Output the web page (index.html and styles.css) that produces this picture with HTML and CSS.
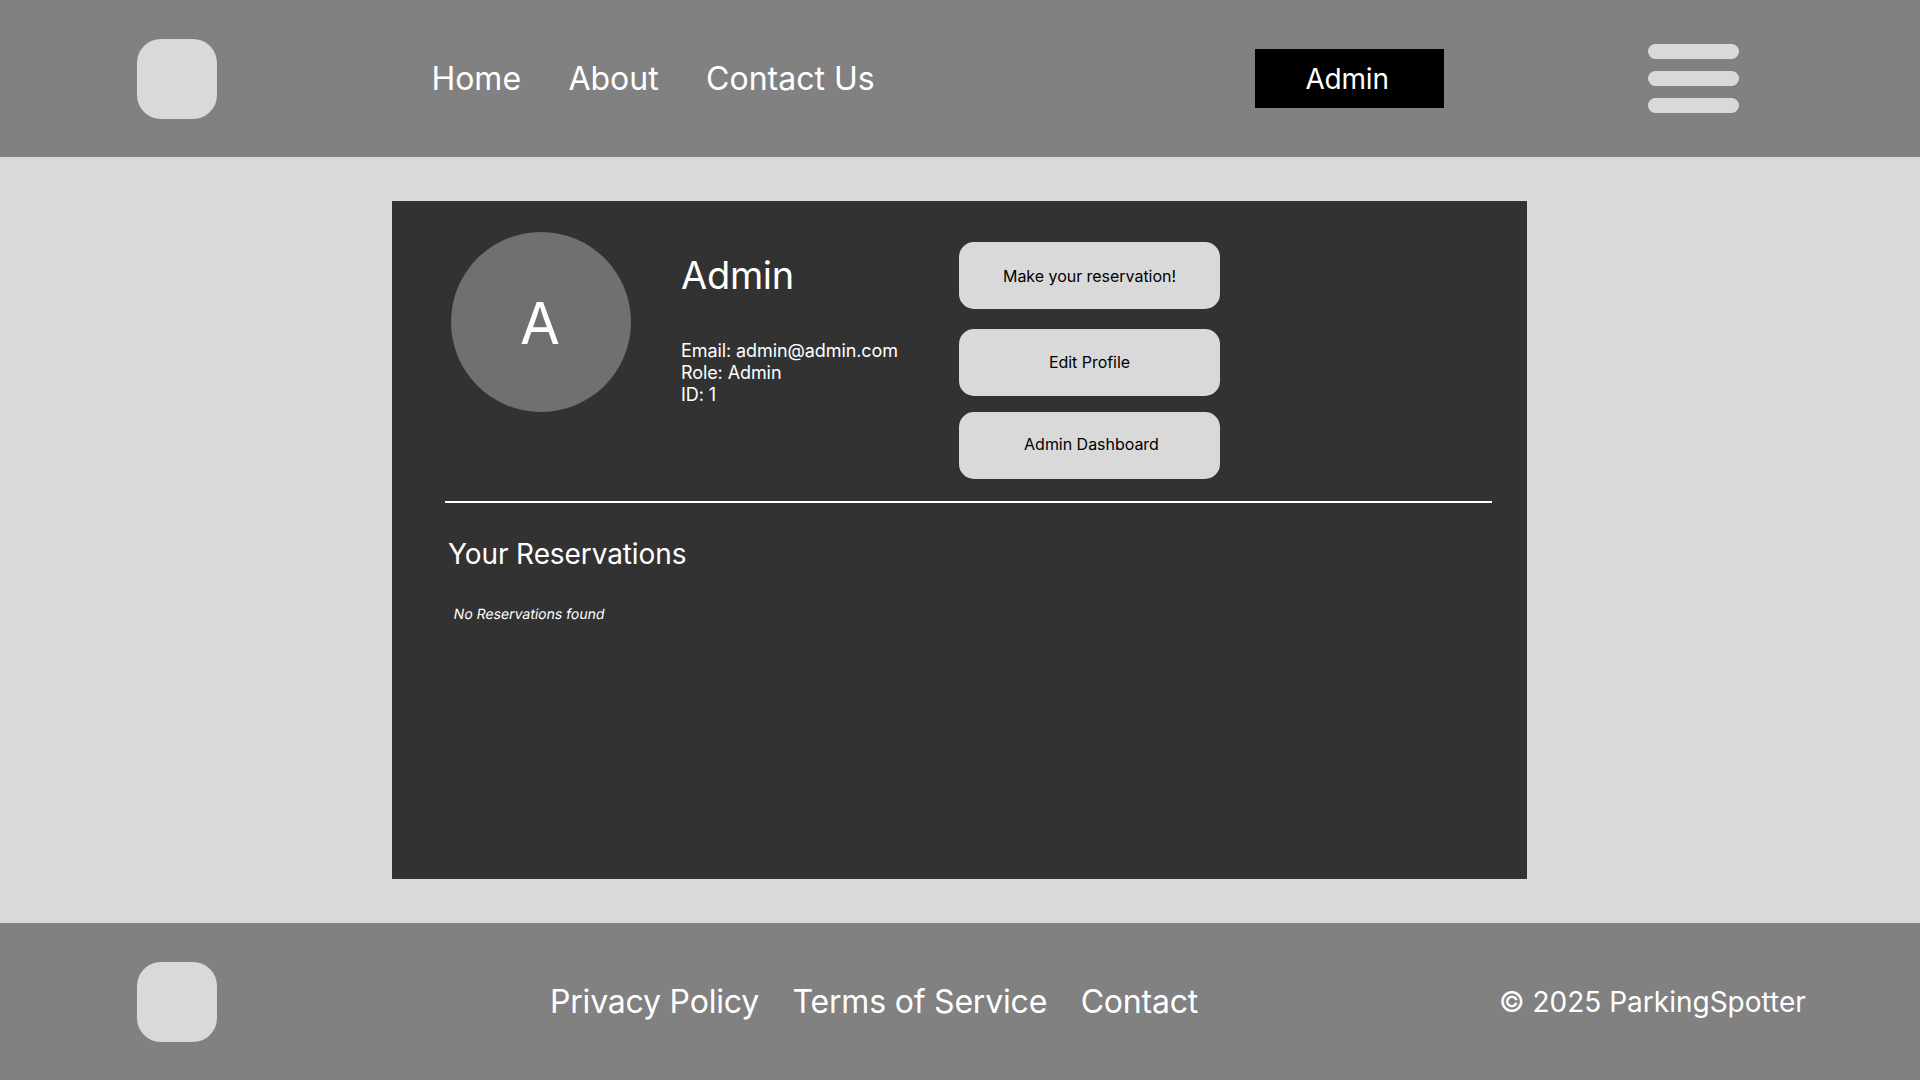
FILE: index.html
```html
<!DOCTYPE html>
<html lang="en">
<head>
<meta charset="utf-8">
<title>ParkingSpotter</title>
<link rel="stylesheet" href="styles.css">
</head>
<body>
<header class="bar header">
  <div class="logo"></div>
  <nav class="nav"><a>Home</a><a>About</a><a>Contact Us</a></nav>
  <div class="account">Admin</div>
  <div class="menu"><span></span><span></span><span></span></div>
</header>
<main class="card">
  <section class="profile">
    <div class="avatar">A</div>
    <div class="info">
      <h1>Admin</h1>
      <p>Email: admin@admin.com<br>Role: Admin<br>ID: 1</p>
    </div>
    <div class="actions">
      <button class="reserve">Make your reservation!</button>
      <button class="edit">Edit Profile</button>
      <button class="dashboard">Admin Dashboard</button>
    </div>
  </section>
  <section class="reservations">
    <h2>Your Reservations</h2>
    <p>No Reservations found</p>
  </section>
</main>
<footer class="bar footer">
  <div class="logo"></div>
  <nav class="links"><a>Privacy Policy</a><a>Terms of Service</a><a>Contact</a></nav>
  <p class="copyright">© 2025 ParkingSpotter</p>
</footer>
</body>
</html>
```
FILE: styles.css
```css
* { box-sizing: border-box; margin: 0; }
body { width: 1920px; height: 1080px; background: #d9d9d9; color: #fff; font-family: Inter, sans-serif; display: flex; flex-direction: column; overflow: hidden; }
.bar { height: 157px; background: #818181; display: flex; align-items: center; padding-left: 137px; white-space: nowrap; }
.logo { width: 80px; height: 80px; border-radius: 24px; background: #d9d9d9; }
.nav { display: flex; gap: 47.4px; margin-left: 214.4px; width: 823.6px; font-size: 32px; }
.account { width: 189.5px; height: 59px; background: #000; font-size: 28px; line-height: 59px; padding: 1px 0 0 50.5px; letter-spacing: -0.2px; }
.menu { display: flex; flex-direction: column; gap: 12px; margin-left: 203.5px; }
.menu span { width: 91px; height: 15px; border-radius: 8px; background: #d9d9d9; }
.card { width: 1135px; height: 678px; margin: 44px 0 44px 392px; background: #323232; padding: 31px 35px 0 53px; }
.profile { display: flex; height: 271px; border-bottom: 2px solid #fff; }
.avatar { width: 180px; height: 180px; margin-left: 6px; padding-right: 2px; border-radius: 50%; background: #707070; font-size: 58px; line-height: 182px; text-align: center; }
.info { width: 278px; margin-left: 50px; padding-top: 20px; }
.info h1 { font-size: 38px; font-weight: 400; line-height: 47px; letter-spacing: -0.3px; }
.info p { font-size: 18px; line-height: 22px; margin-top: 41px; letter-spacing: -0.09px; }
.actions { display: flex; flex-direction: column; padding-top: 10px; }
.actions button { width: 261px; height: 67px; padding: 0; border: 0; border-radius: 15px; background: #d9d9d9; color: #000; font: 16px Inter, sans-serif; letter-spacing: -0.03px; }
.actions .edit { margin: 20px 0 16px; padding-bottom: 2px; }
.actions .dashboard { padding: 0 0 3px 4px; }
.reservations { padding: 34px 0 0 3px; }
.reservations h2 { font-size: 28px; font-weight: 400; line-height: 34px; letter-spacing: -0.1px; }
.reservations p { width: max-content; font-size: 14px; line-height: 17px; margin: 34px 0 0 6px; transform: skewX(-9.4deg); }
.links { display: flex; gap: 33.6px; margin-left: 333px; width: 949px; font-size: 32px; letter-spacing: -0.2px; }
.copyright { font-size: 28px; }
```
